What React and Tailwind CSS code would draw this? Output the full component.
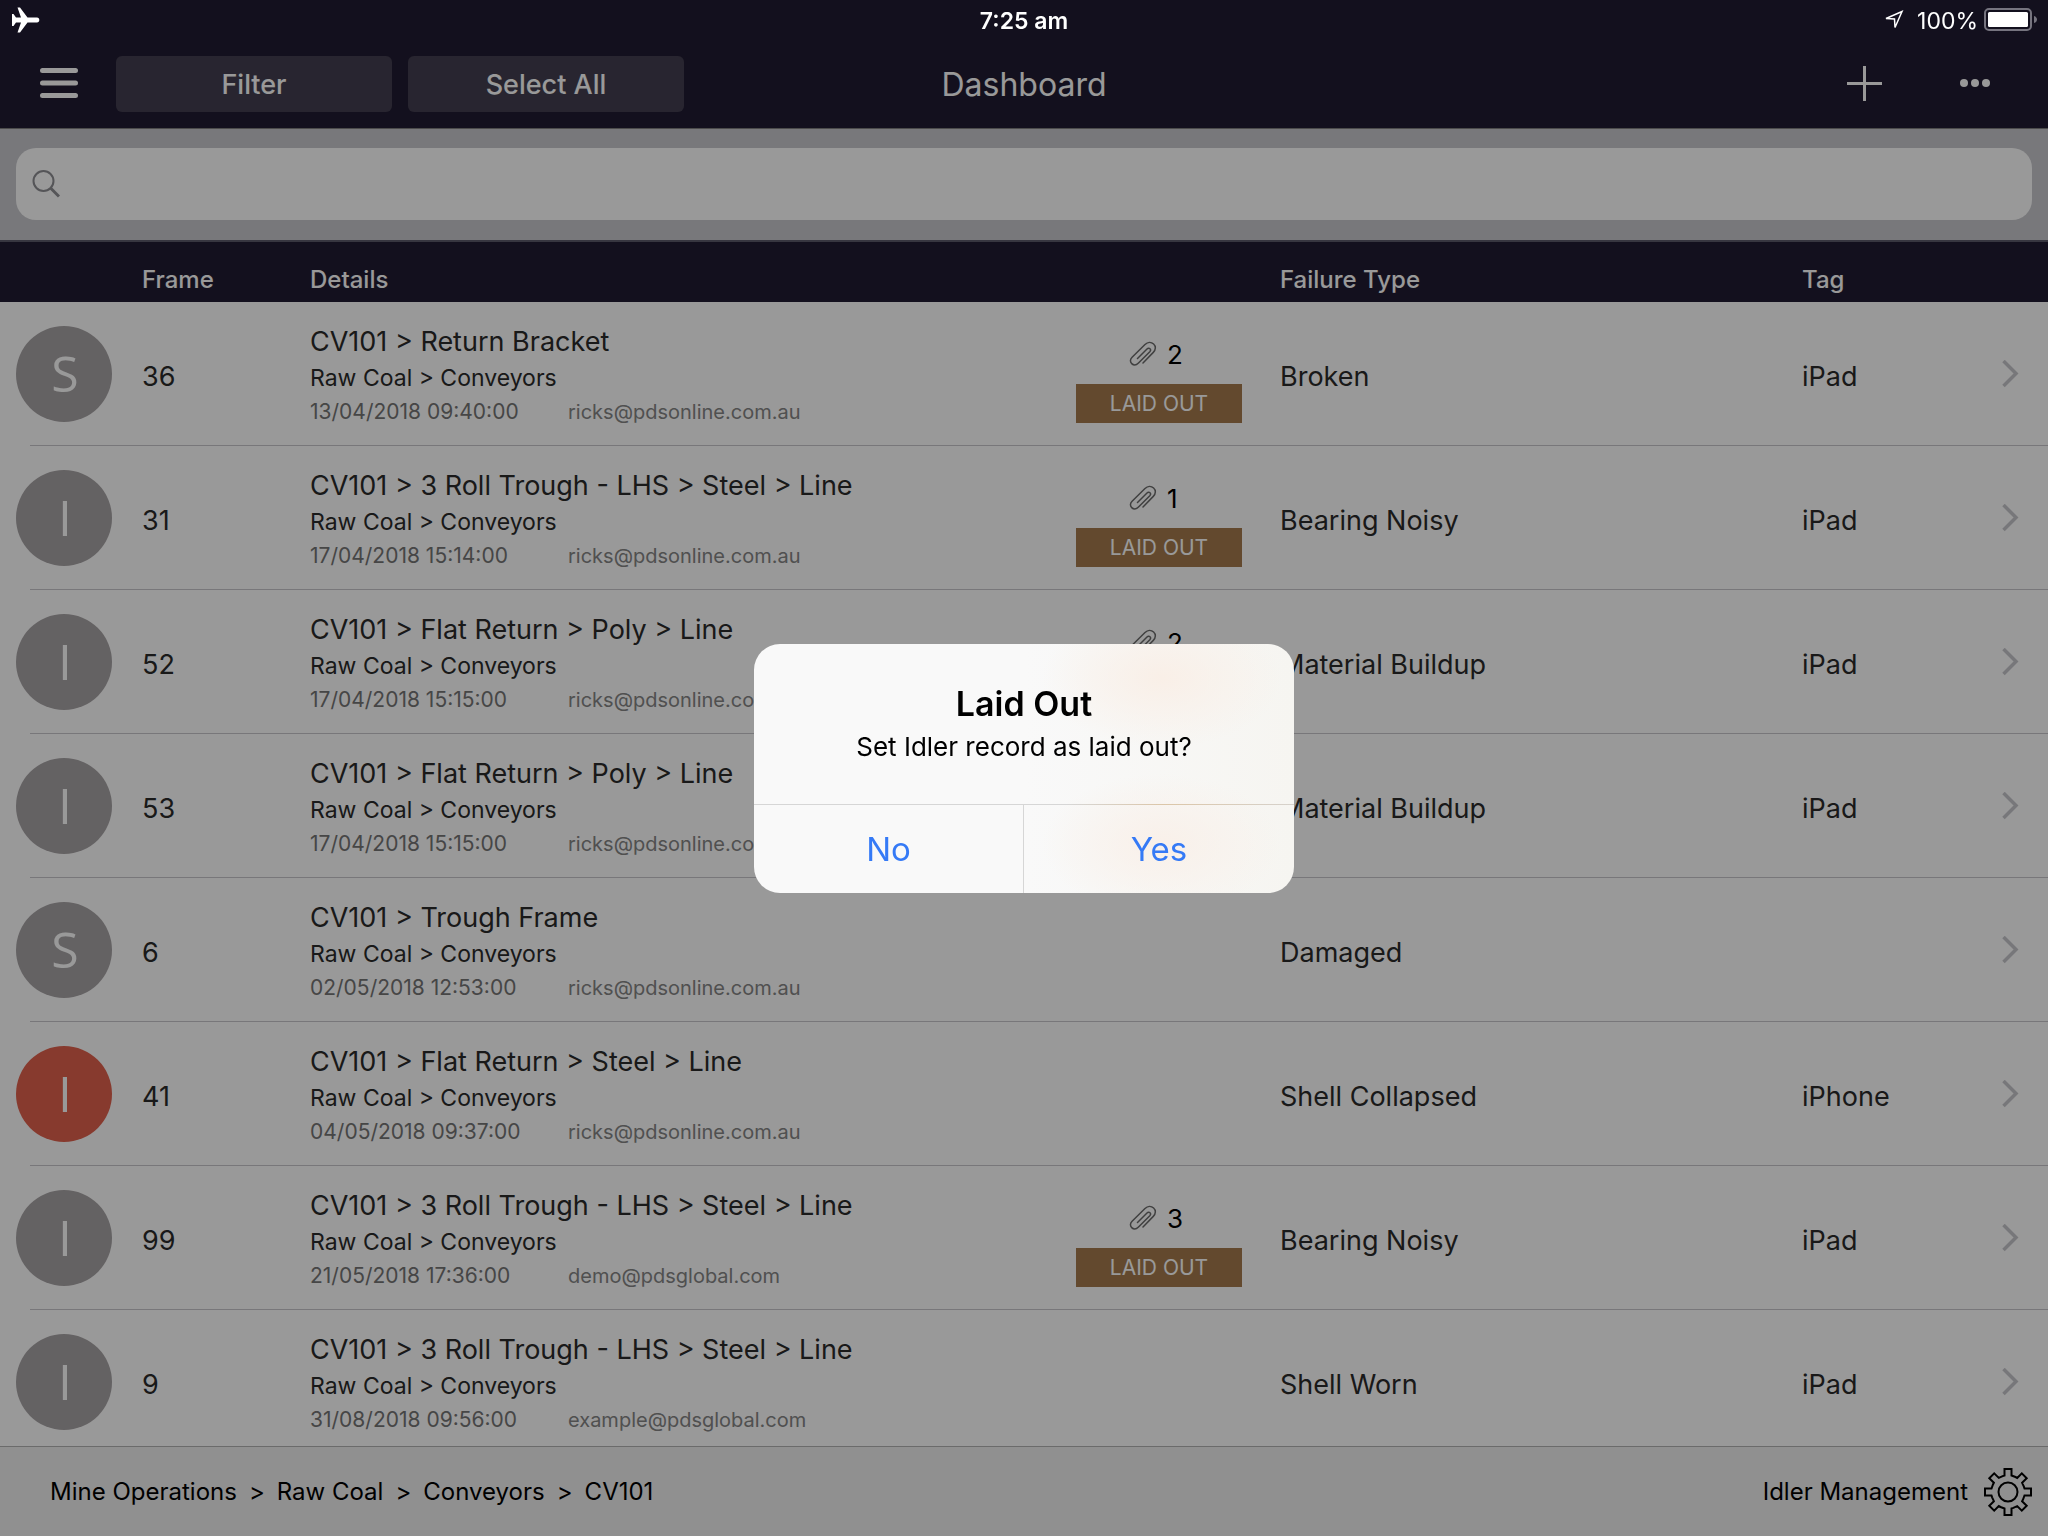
import React, { useState } from 'react';

const RECORDS = [
  { id: 1, type: 'S', frame: '36', title: 'CV101 > Return Bracket', area: 'Raw Coal > Conveyors', date: '13/04/2018 09:40:00', user: 'ricks@pdsonline.com.au', files: 2, laidOut: true, failure: 'Broken', tag: 'iPad' },
  { id: 2, type: 'I', frame: '31', title: 'CV101 > 3 Roll Trough - LHS > Steel > Line', area: 'Raw Coal > Conveyors', date: '17/04/2018 15:14:00', user: 'ricks@pdsonline.com.au', files: 1, laidOut: true, failure: 'Bearing Noisy', tag: 'iPad' },
  { id: 3, type: 'I', frame: '52', title: 'CV101 > Flat Return > Poly > Line', area: 'Raw Coal > Conveyors', date: '17/04/2018 15:15:00', user: 'ricks@pdsonline.com.au', files: 2, laidOut: true, failure: 'Material Buildup', tag: 'iPad' },
  { id: 4, type: 'I', frame: '53', title: 'CV101 > Flat Return > Poly > Line', area: 'Raw Coal > Conveyors', date: '17/04/2018 15:15:00', user: 'ricks@pdsonline.com.au', files: 2, laidOut: true, failure: 'Material Buildup', tag: 'iPad' },
  { id: 5, type: 'S', frame: '6', title: 'CV101 > Trough Frame', area: 'Raw Coal > Conveyors', date: '02/05/2018 12:53:00', user: 'ricks@pdsonline.com.au', failure: 'Damaged', tag: '' },
  { id: 6, type: 'I', frame: '41', title: 'CV101 > Flat Return > Steel > Line', area: 'Raw Coal > Conveyors', date: '04/05/2018 09:37:00', user: 'ricks@pdsonline.com.au', failure: 'Shell Collapsed', tag: 'iPhone', urgent: true },
  { id: 7, type: 'I', frame: '99', title: 'CV101 > 3 Roll Trough - LHS > Steel > Line', area: 'Raw Coal > Conveyors', date: '21/05/2018 17:36:00', user: 'demo@pdsglobal.com', files: 3, laidOut: true, failure: 'Bearing Noisy', tag: 'iPad' },
  { id: 8, type: 'I', frame: '9', title: 'CV101 > 3 Roll Trough - LHS > Steel > Line', area: 'Raw Coal > Conveyors', date: '31/08/2018 09:56:00', user: 'example@pdsglobal.com', failure: 'Shell Worn', tag: 'iPad' },
];

const PATH = ['Mine Operations', 'Raw Coal', 'Conveyors', 'CV101'];

const GEAR_TEETH = [0, 45, 90, 135, 180, 225, 270, 315];

// Outline of the cog: eight square teeth around a ring
function gearPath() {
  const points = [];
  GEAR_TEETH.forEach((deg) => {
    [[-3.5, 16.5], [-3.5, 23], [3.5, 23], [3.5, 16.5], [7.5, 15]].forEach(([x, y]) => {
      const a = (deg * Math.PI) / 180;
      const px = 24 + x * Math.cos(a) + y * Math.sin(a);
      const py = 24 + x * Math.sin(a) - y * Math.cos(a);
      points.push(`${px.toFixed(1)} ${py.toFixed(1)}`);
    });
  });
  return `M${points.join('L')}Z`;
}

function PlaneIcon() {
  return (
    <svg viewBox="0 0 28 26" className="h-[26px] w-7" fill="white">
      <path d="M25 10.500c1.500 0 2.300 1 2.300 2.500s-.8 2.500-2.300 2.500h-9.500L8 25.500H5.500l3.500-10H4L1.500 19H0V7h1.500L4 10.500h5L5.500.5H8l7.500 10z" />
    </svg>
  );
}

function BatteryIcon() {
  return (
    <svg viewBox="0 0 54 24" className="h-6 w-[54px]" fill="none">
      <rect x="1" y="1" width="46" height="21" rx="4" stroke="#76747f" strokeWidth="2" />
      <rect x="4" y="4" width="40" height="15" rx="1.500" fill="white" />
      <path d="M50 8c2 .5 3 2 3 3.500s-1 3-3 3.500z" fill="#76747f" />
    </svg>
  );
}

function ClipIcon() {
  return (
    <svg viewBox="0 0 28 26" className="h-[26px] w-7" fill="none" stroke="#6b6b6b" strokeWidth="1.500" strokeLinecap="round">
      <path d="M8.500 17.500L18 8c1-1 2.200-1 3-.2s.7 2-.2 3L9.500 22c-2.200 2.200-5 2.300-6.800.6s-1.600-4.400.4-6.400L16 3.500c2.700-2.600 6.200-2.700 8.600-.5s2.300 5.800-.3 8.400L14 22" />
    </svg>
  );
}

function RecordRow({ record }) {
  const cell = 'border-b border-[#c8c7cc] p-0';
  return (
    <tr>
      <td className="p-0">
        <div className="ml-[30px] flex h-36 items-center border-b border-[#c8c7cc]">
          <span
            className={`-ml-3.5 flex size-24 items-center justify-center rounded-full pb-0.5 pl-0.5 font-['Open_Sans','Noto_Sans',sans-serif] text-[50px] leading-none text-white ${record.urgent ? 'bg-[#e1614d]' : 'bg-[#a7a3a5]'}`}
          >
            {record.type}
          </span>
        </div>
      </td>
      <td className={`${cell} pt-2 text-[27px]`}>{record.frame}</td>
      <td className={`${cell} pt-1 whitespace-nowrap`}>
        <div className="text-[27px] leading-9">{record.title}</div>
        <div className="text-[23px] leading-9">{record.area}</div>
        <div className="flex leading-8 text-[#757575]">
          <span className="w-[258px] text-[21px]">{record.date}</span>
          <span className="text-xl leading-8 text-[#858585]">{record.user}</span>
        </div>
      </td>
      <td className={`${cell} align-top`}>
        {record.laidOut && (
          <div className="w-[166px] pt-[34px]">
            <div className="flex h-9 items-center gap-2.5 pl-[53px] text-[26px] text-black">
              <ClipIcon />
              {record.files}
            </div>
            <div className="mt-3 bg-[#a57b4d] pt-px text-center text-[21px] leading-[38px] text-white">LAID OUT</div>
          </div>
        )}
      </td>
      <td className={`${cell} pt-2 text-[27px]`}>{record.failure}</td>
      <td className={`${cell} pt-2 text-[27px]`}>{record.tag}</td>
      <td className={cell}>
        <svg viewBox="0 0 18 28" className="h-7 w-[18px]" fill="none" stroke="#c7c7cc" strokeWidth="3.500">
          <path d="M1.500 1L14 13.500L1.500 26" />
        </svg>
      </td>
    </tr>
  );
}

export default function App() {
  const [search, setSearch] = useState('');
  const [open, setOpen] = useState(true);

  return (
    <div className="flex h-screen flex-col overflow-hidden bg-white font-['Inter',sans-serif] text-[#2b2b2b]">
      <header className="border-b border-[#7f7f7f] bg-[#211c32] text-white">
        {/* status bar stays bright above the dimmed page */}
        <div className="relative z-20 grid h-10 grid-cols-[1fr_auto_1fr] items-center px-3 text-[23px]">
          <PlaneIcon />
          <span className="pt-0.5 font-semibold">7:25 am</span>
          <div className="-mr-0.5 flex items-center justify-end gap-1.5">
            <svg viewBox="0 0 22 22" className="mr-1.5 size-[22px]" fill="none" stroke="white" strokeWidth="1.500">
              <path d="M3 9.500L19 2.500L12 18.500L11.500 10Z" />
            </svg>
            <span className="pt-0.5">100%</span>
            <BatteryIcon />
          </div>
        </div>

        <div className="grid h-[88px] grid-cols-[1fr_auto_1fr] items-center">
          <div className="flex items-center gap-4 pl-10">
            <button aria-label="Menu" className="mr-[22px]">
              <svg viewBox="0 0 38 32" className="h-8 w-[38px]" stroke="white" strokeWidth="5" strokeLinecap="round">
                <path d="M2.500 2.500h33M2.500 15h33M2.500 27.500h33" />
              </svg>
            </button>
            <button className="h-14 w-[276px] rounded-md bg-[#433f50] pt-0.5 text-[27px] font-medium">Filter</button>
            <button className="h-14 w-[276px] rounded-md bg-[#433f50] pt-0.5 text-[27px] font-medium">Select All</button>
          </div>
          <h1 className="pt-0.5 text-[32px]">Dashboard</h1>
          <div className="flex items-center justify-end gap-[77px] pr-[57px]">
            <button aria-label="Add">
              <svg viewBox="0 0 36 36" className="size-9" stroke="white" strokeWidth="3">
                <path d="M18.500 0v35M1 17.500h35" />
              </svg>
            </button>
            <button aria-label="More">
              <svg viewBox="0 0 32 10" className="h-2.5 w-8" fill="white">
                <circle cx="5" cy="4" r="4" />
                <circle cx="16" cy="4" r="4" />
                <circle cx="27" cy="4" r="4" />
              </svg>
            </button>
          </div>
        </div>
      </header>

      <div className="border-b-2 border-[#5c5a6b] bg-[#c9c9ce] px-4 pt-[19px] pb-5">
        <label className="flex h-[72px] items-center rounded-[20px] bg-white px-4">
          <svg viewBox="0 0 28 28" className="size-7" fill="none" stroke="#8e8e93">
            <circle cx="11.500" cy="11" r="10" strokeWidth="2" />
            <path d="M18.500 18L27 26.500" strokeWidth="3" />
          </svg>
          <input
            type="search"
            aria-label="Search"
            value={search}
            onChange={(e) => setSearch(e.target.value)}
            className="ml-3 flex-1 bg-transparent text-2xl outline-none"
          />
        </label>
      </div>

      <main className="min-h-0 flex-1 overflow-hidden">
        <table className="w-full table-fixed border-separate border-spacing-0 text-left">
          <colgroup>
            <col className="w-[142px]" />
            <col className="w-[168px]" />
            <col />
            <col className="w-[204px]" />
            <col className="w-[522px]" />
            <col className="w-[200px]" />
            <col className="w-[46px]" />
          </colgroup>
          <thead>
            <tr className="h-[60px] bg-[#211c32] text-2xl text-white">
              <th className="p-0" />
              <th className="p-0 pt-4 font-medium">Frame</th>
              <th className="p-0 pt-4 font-medium">Details</th>
              <th className="p-0" />
              <th className="p-0 pt-4 font-medium">Failure Type</th>
              <th className="p-0 pt-4 font-medium">Tag</th>
              <th className="p-0" />
            </tr>
          </thead>
          <tbody>
            {RECORDS.map((record) => (
              <RecordRow key={record.id} record={record} />
            ))}
          </tbody>
        </table>
      </main>

      <footer className="flex h-[90px] items-center justify-between border-t border-[#b2b2b2] bg-[#f0f0f0] pr-4 pl-[50px] text-2xl text-black">
        <nav className="flex gap-3">
          {PATH.map((name, i) => (
            <React.Fragment key={name}>
              {i > 0 && <span>&gt;</span>}
              <a href="#">{name}</a>
            </React.Fragment>
          ))}
        </nav>
        <button className="flex items-center gap-4">
          Idler Management
          <svg viewBox="0 0 48 48" className="size-12" fill="none" stroke="black" strokeWidth="2">
            <path d={gearPath()} />
            <circle cx="24" cy="24" r="9.500" />
          </svg>
        </button>
      </footer>

      {open && (
        <div className="fixed inset-0 z-10 flex items-center justify-center bg-black/40">
          <div
            role="alertdialog"
            aria-labelledby="alert-title"
            className="w-[540px] overflow-hidden rounded-[26px] bg-[#f9f9f9] bg-[radial-gradient(ellipse_120px_70px_at_408px_34px,#f9efe7,transparent),radial-gradient(ellipse_120px_70px_at_408px_200px,#f9f0e9,transparent),linear-gradient(90deg,#f9f9f9_50%,#f6f5f1)] text-center text-black"
          >
            <div className="px-8 pt-[39px] pb-[41px]">
              <h2 id="alert-title" className="text-[34px] leading-[42px] font-semibold">Laid Out</h2>
              <p className="mt-1.5 text-[26px] leading-8">Set Idler record as laid out?</p>
            </div>
            <div className="h-px bg-[linear-gradient(90deg,#d6d6d6_58%,#dcc6a8_76%,#d6d2cc)]" />
            <div className="grid grid-cols-2 divide-x divide-[#d6d6d6] text-[33px] text-[#357af6]">
              <button className="h-[88px] pt-0.5" onClick={() => setOpen(false)}>No</button>
              <button className="h-[88px] pt-0.5" onClick={() => setOpen(false)}>Yes</button>
            </div>
          </div>
        </div>
      )}
    </div>
  );
}
